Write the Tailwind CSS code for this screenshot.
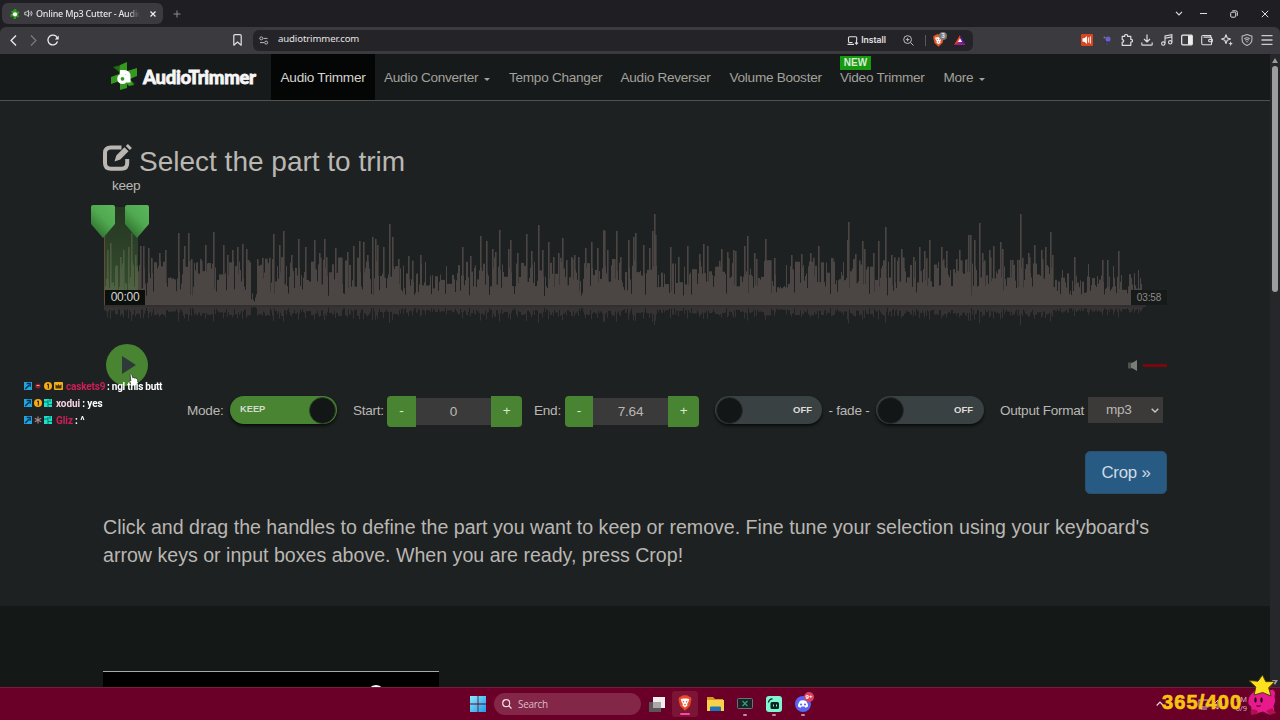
<!DOCTYPE html>
<html lang="en">
  <head>
    <meta charset="UTF-8" />
    <title>Online Mp3 Cutter - Audio Trimmer</title>
    <meta name="viewport" content="width=device-width, initial-scale=1.0" />
    <script src="https://cdn.jsdelivr.net/npm/@tailwindcss/browser@4"></script>
  </head>
  <body class="relative w-[1280px] h-[720px] overflow-hidden flex flex-col bg-[#1d2122] font-['Liberation_Sans',Arial,sans-serif] text-[13.600px] tracking-[-0.270px] text-[#bab7b2]">
    <!-- Tab strip -->
    <div class="h-[27px] shrink-0 bg-[#1f1e23] flex items-center pl-[2px] pr-[11px] font-['Noto_Sans',sans-serif] text-[#e4e4e6]">
      <div class="w-[161px] h-[21px] rounded-md bg-[#3b3a3f] flex items-center pl-[8px] pr-[7px]">
        <svg class="w-[10px] h-[10px] shrink-0" viewBox="0 0 28 28">
          <path fill="#2f9a1c" d="M11 1l7-1v7l8-1-1 8-4 1 5 6-6 3-3-2v6l-7 1v-8l-9 1 1-8 5-2-5-6 7-1z" />
          <circle cx="14" cy="15" r="6" fill="#fff" />
        </svg>
        <svg class="w-[9px] h-[9px] ml-[4px] shrink-0" viewBox="0 0 12 12" fill="none" stroke="#e4e4e6" stroke-width="1.1">
          <path d="M1 4.300h2L6 2v8L3 7.700H1zM7.700 4.300q1.500 1.700 0 3.400M9.300 2.500q3 3.500 0 7" />
        </svg>
        <span class="w-[104px] ml-[3px] text-[9px] leading-none tracking-[-0.220px] py-1 font-medium whitespace-nowrap overflow-hidden mask-r-from-88%">Online Mp3 Cutter - Audio Trimmer</span>
        <svg class="w-[6px] h-[6px] ml-auto" viewBox="0 0 6 6" stroke="#f0f0f0" stroke-width="1.200"><path d="M.5 .5l5 5M5.500 .5l-5 5" /></svg>
      </div>
      <svg class="w-[8px] h-[8px] ml-[10px]" viewBox="0 0 8 8" stroke="#8d8c92" stroke-width="1"><path d="M4 .5v7M.5 4h7" /></svg>
      <div class="ml-auto flex items-center">
        <svg class="w-[8px] h-[5px]" viewBox="0 0 8 5" fill="none" stroke="#ddd" stroke-width="1.200"><path d="M1 .8l3 3 3-3" /></svg>
        <div class="w-[7px] h-px bg-[#ddd] ml-[17px]"></div>
        <svg class="w-[8px] h-[8px] ml-[23px]" viewBox="0 0 8 8" fill="none" stroke="#ddd" stroke-width="1"><rect x=".7" y="2.200" width="5" height="5" rx="1" /><path d="M2.300 .8h3.500q1.500 0 1.500 1.500v3.500" /></svg>
        <svg class="w-[8px] h-[8px] ml-[23px]" viewBox="0 0 8 8" stroke="#ddd" stroke-width="1"><path d="M.8 .8l6.400 6.400M7.200 .8L.8 7.200" /></svg>
      </div>
    </div>

    <!-- Toolbar -->
    <div class="h-[27px] shrink-0 bg-[#3b3a3f] rounded-t-md flex items-center pl-[10px] pr-[7px] pb-px font-[Inter,sans-serif] tracking-normal text-[#e4e4e6]">
      <svg class="w-[7px] h-[11px]" viewBox="0 0 6 10" fill="none" stroke="#ececec" stroke-width="1.200"><path d="M5.300 .5L.8 5l4.500 4.500" /></svg>
      <svg class="w-[7px] h-[11px] ml-[13px]" viewBox="0 0 6 10" fill="none" stroke="#7a797e" stroke-width="1.200"><path d="M.7 .5L5.200 5 .7 9.500" /></svg>
      <svg class="w-[12px] h-[12px] ml-[10px]" viewBox="0 0 12 12" fill="none" stroke="#ececec" stroke-width="1.300"><path d="M10.500 7.500A4.900 4.900 0 1 1 10.300 4" /><path d="M11.700 1.500v4H7.800z" fill="#ececec" stroke="none" /></svg>
      <svg class="w-[9px] h-[12px] ml-[174px]" viewBox="0 0 9 12" fill="none" stroke="#e0e0e0" stroke-width="1.200" stroke-linejoin="round"><path d="M.8 11.200V1.800q0-1.100 1.100-1.100h5.200q1.100 0 1.100 1.100v9.400L4.500 8z" /></svg>
      <div class="w-[720px] h-[21px] ml-[11px] rounded-md bg-[#242328] flex items-center pl-[6px] pr-[7px]">
        <svg class="w-[10px] h-[9px]" viewBox="0 0 10 9" fill="none" stroke="#bbb" stroke-width="1"><circle cx="2.300" cy="2.400" r="1.500" /><path d="M4.500 2.400h4M1 6.600h4" /><circle cx="7.200" cy="6.600" r="1.500" /></svg>
        <span class="ml-[9px] font-['Noto_Sans',sans-serif] text-[9.600px] tracking-[-0.120px] pb-px">audiotrimmer.com</span>
        <svg class="w-[12px] h-[9px] ml-auto" viewBox="0 0 12 9" fill="none" stroke="#ddd" stroke-width="1.100"><path d="M5.500 6.500H2.500q-1 0-1-1V1.700q0-1 1-1h6.200q1 0 1 1V4M.5 8.400h6.500M9.500 4v4M8 6.600l1.500 1.600L11 6.600" /></svg>
        <span class="ml-[2px] text-[8.600px] font-semibold">Install</span>
        <svg class="w-[11px] h-[11px] ml-[17px]" viewBox="0 0 11 11" fill="none" stroke="#bbb" stroke-width="1"><circle cx="4.600" cy="4.600" r="3.900" /><path d="M7.500 7.500l3 3M2.800 4.600h3.600M4.600 2.800v3.600" /></svg>
        <div class="w-px h-[11px] bg-[#5a595f] ml-[11px]"></div>
        <div class="relative ml-[7px]">
          <svg class="w-[11px] h-[13px]" viewBox="0 0 11 13"><path fill="#e2562a" d="M2.500 1L4 .3h3l1.500.7L10.500 2l.2 2-1.200 5-4 3.700-4-3.700L.3 4l.2-2z" /><path fill="#fff" d="M2 3.600l2.200-.4h2.600l2.200.4-.8 2.300-1 1.400.4 1.200-2.100 1.700-2.100-1.700.4-1.200-1-1.400z" /><path fill="#e2562a" d="M3.500 4.500l1.500 1-1 .7zM7.500 4.500l-1.500 1 1 .7zM5.500 7l.8.9-.8.600-.8-.6z" /></svg>
          <div class="absolute -top-[2px] left-[6px] w-[8px] h-[8px] rounded-full bg-[#77767b] text-[6px] leading-[8px] text-center font-bold">3</div>
        </div>
        <svg class="w-[12px] h-[10px] ml-[10px]" viewBox="0 0 12 10"><path fill="#f4401f" d="M6 0L0 10l6-3z" /><path fill="#9b1f8e" d="M0 10h12L6 6.500z" /><path fill="#5b1c8c" d="M6 0l6 10-6-3z" /><path fill="#fff" d="M6 3.200L8.100 7H3.900z" /></svg>
      </div>
      <div class="ml-auto flex items-center gap-[8px]">
        <svg class="w-[12px] h-[12px]" viewBox="0 0 12 12"><rect width="12" height="12" rx="1" fill="#dc4522" /><path fill="#fff" d="M1.500 4.300h1.800L6 2v8L3.300 7.700H1.500z" /><path d="M7.400 3.500v5M9.300 2.500v7" stroke="#fff" stroke-width="1" /></svg>
        <svg class="w-[12px] h-[12px]" viewBox="0 0 12 12"><path fill="#302d55" d="M3 4l3-2 2 7-3 1z" /><circle cx="7" cy="5" r="2.600" fill="#6a61c4" /><circle cx="3.500" cy="3.600" r="1" fill="#82816f" /><circle cx="6" cy="9.500" r="1" fill="#4a466f" /></svg>
        <svg class="w-[12px] h-[12px]" viewBox="0 0 12 12" fill="none" stroke="#ddd" stroke-width="1.200" stroke-linejoin="round"><path d="M1.200 2.400h2.500q-.2-1.900 1.400-1.900t1.500 1.900h3.200v3q1.700-.1 1.700 1.300T9.800 8v3.300H1.200V8.200q1.500 0 1.500-1.300T1.200 5.600z" /></svg>
        <svg class="w-[12px] h-[12px]" viewBox="0 0 12 12" fill="none" stroke="#ddd" stroke-width="1.200"><path d="M6 .5v7M3 5l3 3 3-3M.8 8.500v1.700q0 1 1 1h8.400q1 0 1-1V8.500" /></svg>
        <svg class="w-[12px] h-[12px]" viewBox="0 0 12 12" fill="none" stroke="#ddd" stroke-width="1.100"><circle cx="2.300" cy="9.600" r="1.700" /><circle cx="9.200" cy="8.300" r="1.700" /><path d="M4 9.600V2l6.900-1.300v7.600M4 4.200l6.900-1.300" /></svg>
        <svg class="w-[12px] h-[12px]" viewBox="0 0 12 12"><rect x=".7" y="1.200" width="10.600" height="9.600" rx="1" fill="none" stroke="#eee" stroke-width="1.200" /><rect x="7" y="1.500" width="4" height="9" fill="#eee" /></svg>
        <svg class="w-[12px] h-[12px]" viewBox="0 0 12 12" fill="none" stroke="#ddd" stroke-width="1.100"><path d="M9.700 3V1.500H2Q.7 1.500.7 2.700v6.600q0 1.400 1.400 1.400h7.600q.8 0 .8-.8V3.900q0-.8-.8-.8H2.500M11.300 5.400H8.600q-1 0-1 1.200t1 1.200h2.700z" /></svg>
        <svg class="w-[12px] h-[12px]" viewBox="0 0 12 12" fill="none" stroke="#ddd" stroke-width="1.100" stroke-linejoin="round"><path d="M5 .8l1.200 3.100L9.500 5 6.200 6.300 5 9.500 3.800 6.300.6 5l3.200-1.100z" /><path fill="#ddd" stroke="none" d="M9.700 7.300l.7 1.600 1.500.7-1.500.6-.7 1.700-.7-1.700-1.500-.6L9 8.900z" /></svg>
        <svg class="w-[12px] h-[12px]" viewBox="0 0 12 12" fill="none" stroke="#bbb" stroke-width="1.100"><path d="M6 .6l4.900 1.600v3.500q0 3.700-4.900 5.700Q1.100 9.400 1.100 5.700V2.200z" /><path d="M3.300 4.700q2.700-2 5.400 0M4.200 6.200q1.800-1.300 3.600 0M5.200 7.700h1.600" /></svg>
        <svg class="w-[12px] h-[12px]" viewBox="0 0 12 12" stroke="#ccc" stroke-width="1.300"><path d="M.5 1.700h11M.5 6h11M.5 10.300h11" /></svg>
      </div>
    </div>

    <!-- Page -->
    <div class="h-[633px] shrink-0 flex">
      <div class="w-[1270px] flex flex-col">
        <nav class="h-[47px] shrink-0 bg-[#161a1a] border-b border-[#50524f] flex pl-[110px] text-[#a3a19c] whitespace-nowrap">
          <div class="w-[161px] flex items-center">
            <svg class="w-[28px] h-[29px] -mt-[2px]" viewBox="0 0 28 29">
              <path fill="#1f6a12" d="M3 5l8-2 3 11zM25 22l-8-1-3-8z" />
              <path fill="#35991f" d="M10 3l7-3v9l10-3v8l-7 3 4 6-5 1-2-2v4l-7 2v-9l-9 3v-7l8-3z" />
              <path fill="none" stroke="#fff" stroke-width="4" d="M18.500 20.500v-6q0-4.500-4.500-4.500h-4" />
              <circle cx="12.500" cy="16.800" r="3.600" fill="none" stroke="#fff" stroke-width="3.400" />
            </svg>
            <span class="ml-[5px] font-[Lato,sans-serif] font-black text-[18.500px] leading-none tracking-[-0.300px] text-[#f6f6f6] [-webkit-text-stroke:0.800px_#f6f6f6]">AudioTrimmer</span>
          </div>
          <a class="w-[104px] pt-[2px] bg-[#040606] text-[#d6d4d0] flex items-center justify-center">Audio Trimmer</a>
          <a class="ml-[9px] w-[106px] pt-[2px] flex items-center">Audio Converter<span class="ml-auto mt-[3px] border-x-[3.500px] border-x-transparent border-t-[3px] border-t-[#a3a19c]"></span></a>
          <a class="ml-[19px] w-[93px] pt-[2px] flex items-center">Tempo Changer</a>
          <a class="ml-[18.500px] w-[91px] pt-[2px] flex items-center">Audio Reverser</a>
          <a class="ml-[18px] w-[92px] pt-[2px] flex items-center">Volume Booster</a>
          <a class="relative ml-[18.500px] w-[85px] pt-[2px] flex items-center">Video Trimmer
            <span class="absolute left-0 top-[2px] w-[31px] h-[14px] bg-[#179a10] text-[#dcebd8] text-[10px] tracking-normal leading-[14px] font-bold text-center">NEW</span>
          </a>
          <a class="ml-[18.500px] pt-[2px] flex items-center">More<span class="ml-[6px] mt-[3px] border-x-[3.500px] border-x-transparent border-t-[3px] border-t-[#a3a19c]"></span></a>
        </nav>

        <section class="h-[505px] shrink-0 pl-[103px] pr-[103px] bg-[#1d2122] flex flex-col">
          <h2 class="mt-[42px] h-[36px] flex items-center text-[28px] tracking-normal leading-[36px] pt-px">
            <svg class="w-[30px] h-[28px] mr-[6px] -mt-[7px]" viewBox="0 0 30 28" fill="none" stroke="#bab7b2" stroke-width="4">
              <path d="M18.500 3.500H8Q2 3.500 2 9v10q0 5.800 6 5.800h10.500q5.700 0 5.700-5.800v-4" />
              <path fill="#bab7b2" stroke="none" d="M11.500 17.500l1.800-6 8.200-8.200 4 4-8.200 8.200zM22.800 2.100L24.900 0l4 4-2.100 2.100z" />
            </svg>
            Select the part to trim
          </h2>
          <div class="ml-[9px] h-[15px] leading-[14px]">keep</div>

          <!-- Waveform with selection -->
          <div class="relative h-[131px] mt-[8px] -ml-[13px] w-[1077px]">
            <canvas id="wave" width="1077" height="131" class="block"></canvas>
            <div class="absolute left-[14px] top-[5px] w-[34px] h-[98px] bg-linear-to-b from-[#356a20]/30 to-[#5b8c45]/45 border-l border-[#6b4632]"></div>
            <svg class="absolute left-0 top-[2px] w-[60px] h-[36px]" viewBox="0 0 60 36">
              <defs>
                <linearGradient id="handle" x1="1" y1="0" x2="0.300" y2="1">
                  <stop offset="0" stop-color="#5cb85c" />
                  <stop offset="0.500" stop-color="#50a950" />
                  <stop offset="1" stop-color="#2d6d2d" />
                </linearGradient>
              </defs>
              <path fill="url(#handle)" d="M3 1h20q2 0 2 2v17L13 34 1 20V3q0-2 2-2z" />
              <path fill="url(#handle)" d="M37 1h20q2 0 2 2v17L47 34 35 20V3q0-2 2-2z" />
            </svg>
            <span class="absolute left-[15px] top-[88px] w-[40px] h-[15px] bg-[#0c100d] text-[#d6d4d0] text-[12px] leading-[15px] text-center">00:00</span>
            <span class="absolute left-[1041px] top-[88px] w-[36px] h-[15px] bg-[#171a1b] text-[#8d8b88] text-[10px] tracking-[-0.100px] leading-[15px] text-center">03:58</span>
          </div>

          <div class="mt-[11px] h-[42px] flex items-center">
            <div class="w-[42px] h-[42px] ml-[3px] rounded-full bg-[#488431] flex items-center justify-center">
              <svg class="w-[14px] h-[18px] ml-[3px] -mt-px" viewBox="0 0 14 18"><path fill="#30393a" d="M0 0l14 9-14 9z" /></svg>
            </div>
            <svg class="w-[9px] h-[11px] ml-auto" viewBox="0 0 9 11"><path fill="#4d504d" d="M0 2.500h4v6H0z" /><path fill="#7b7d77" d="M9 0v11L3 7.500v-4z" /></svg>
            <div class="w-[24px] h-[3px] ml-[6px] bg-[#78080f]"></div>
          </div>

          <div class="mt-[7px] h-[36px] ml-[84px] flex items-center whitespace-nowrap">
            <span class="w-[43px]">Mode:</span>
            <div class="w-[107px] h-[28px] -mt-[2px] rounded-full bg-[#488431] shadow-[0_2px_3px_#0a0c0c] flex items-center pl-[10px] pr-px text-[#d3dccf] text-[9.300px] tracking-normal font-bold">KEEP
              <span class="ml-auto w-[27px] h-[27px] rounded-full bg-[#121617] border border-[#2c4322]"></span>
            </div>
            <span class="ml-[16px] w-[34px]">Start:</span>
            <div class="flex items-center text-center">
              <span class="w-[29px] h-[31px] rounded-l bg-[#488431] leading-[30px] text-[#dbe6d5]">-</span>
              <span class="w-[75px] h-[27px] bg-[#3b3a3a] leading-[27px]">0</span>
              <span class="w-[31px] h-[31px] rounded-r bg-[#488431] leading-[30px] text-[#dbe6d5]">+</span>
            </div>
            <span class="ml-[12px] w-[31px]">End:</span>
            <div class="flex items-center text-center">
              <span class="w-[28px] h-[31px] rounded-l bg-[#488431] leading-[30px] text-[#dbe6d5]">-</span>
              <span class="w-[75px] h-[27px] bg-[#3b3a3a] leading-[27px]">7.64</span>
              <span class="w-[31px] h-[31px] rounded-r bg-[#488431] leading-[30px] text-[#dbe6d5]">+</span>
            </div>
            <div class="ml-[16px] w-[107px] h-[28px] -mt-[2px] rounded-full bg-[#3a4143] shadow-[0_2px_3px_#0a0c0c] flex items-center pl-px pr-[10px] text-[#dddcd9] text-[9.500px] tracking-normal font-bold">
              <span class="mr-auto w-[27px] h-[27px] rounded-full bg-[#121617] border border-[#272c2d]"></span>OFF
            </div>
            <span class="w-[54px] text-center">- fade -</span>
            <div class="w-[108px] h-[28px] -mt-[2px] rounded-full bg-[#3a4143] shadow-[0_2px_3px_#0a0c0c] flex items-center pl-px pr-[11px] text-[#dddcd9] text-[9.500px] tracking-normal font-bold">
              <span class="mr-auto w-[27px] h-[27px] rounded-full bg-[#121617] border border-[#272c2d]"></span>OFF
            </div>
            <span class="ml-[16px] w-[88px]">Output Format</span>
            <div class="w-[75px] h-[26px] -mt-[2px] bg-[#3b3a39] flex items-center pl-[18px] pr-[4px]">mp3
              <svg class="w-[8px] h-[5px] ml-auto" viewBox="0 0 8 5" fill="none" stroke="#c8c6c2" stroke-width="1.400"><path d="M.7 .7L4 4 7.300 .7" /></svg>
            </div>
          </div>

          <div class="mt-[22px] ml-auto w-[82px] h-[43px] rounded-[5px] bg-[#285b84] border border-[#2c5069] text-[#cfdbe4] text-[16.800px] tracking-[-0.200px] leading-[41px] text-center">Crop »</div>

          <p class="mt-[19px] text-[19.600px] tracking-normal leading-[28px] whitespace-nowrap">Click and drag the handles to define the part you want to keep or remove. Fine tune your selection using your keyboard's<br />arrow keys or input boxes above. When you are ready, press Crop!</p>
        </section>

        <section class="h-[82px] shrink-0 bg-[#141817] pl-[103px] pt-[65px] overflow-hidden">
          <div class="w-[336px] h-[17px] bg-black border-t border-[#a9a9a7] overflow-hidden flex text-white">
            <span class="ml-[122px] mt-[12px] text-[14px] leading-[18px] tracking-normal font-bold">Trim Audio Clips</span>
            <span class="ml-[31px] mt-[13px] w-[18px] h-[18px] rounded-full bg-white"></span>
          </div>
        </section>
      </div>
      <!-- Scrollbar -->
      <div class="w-[10px] bg-[#26272a] flex flex-col items-center pt-[4px] pb-[2px]">
        <div class="border-x-[3.500px] border-x-transparent border-b-[5px] border-b-[#9a9a9a]"></div>
        <div class="w-[6px] h-[226px] mt-[3px] rounded-full bg-[#9c9d9d]"></div>
        <div class="mt-auto border-x-[3.500px] border-x-transparent border-t-[5px] border-t-[#9a9a9a]"></div>
      </div>
    </div>

    <!-- Taskbar -->
    <div class="h-[33px] shrink-0 bg-[#6a0028] border-t border-[#7b1c3c] flex items-center pl-[470px] font-['Open_Sans',sans-serif] tracking-normal">
      <svg class="w-[16px] h-[16px]" viewBox="0 0 16 16">
        <defs><linearGradient id="win" x1="0" y1="0" x2="1" y2="1"><stop offset="0" stop-color="#8ce8fb" /><stop offset="1" stop-color="#1e9be8" /></linearGradient></defs>
        <path fill="url(#win)" d="M0 0h7.600v7.600H0zM8.400 0H16v7.600H8.400zM0 8.400h7.600V16H0zM8.400 8.400H16V16H8.400z" />
      </svg>
      <div class="ml-[8px] w-[147px] h-[22px] rounded-full bg-[#832648] flex items-center pl-[8px] text-[10px] text-[#dcbcc8]">
        <svg class="w-[10px] h-[10px] mr-[6px]" viewBox="0 0 10 10" fill="none" stroke="#f0e0e6" stroke-width="1.200"><circle cx="4.200" cy="4.200" r="3.500" /><path d="M6.800 6.800l2.700 2.700" /></svg>
        <span class="tracking-[-0.300px]">Search</span>
      </div>
      <svg class="w-[16px] h-[15px] ml-[8px]" viewBox="0 0 16 15"><rect x="4" width="12" height="11" fill="#f1eef0" /><rect y="5" width="12" height="10" fill="#5c565b" /><rect x="4" y="5" width="8" height="6" fill="#aaa8a9" /></svg>
      <div class="w-[26px] h-[26px] ml-[7px] rounded-[3px] bg-[#7b1435] flex flex-col items-center pt-[4px]">
        <svg class="w-[14px] h-[16px] shrink-0" viewBox="0 0 11 13"><path fill="#ea4826" d="M2.500 1L4 .3h3l1.500.7L10.500 2l.2 2-1.200 5-4 3.700-4-3.700L.3 4l.2-2z" /><path fill="#fff" d="M2 3.200l2.200-.4h2.600l2.200.4-.8 2.700-1 1.400.4 1.200-2.100 1.700-2.100-1.700.4-1.200-1-1.400z" /><path fill="#ea4826" d="M3.500 4.500l1.500 1-1 .7zM7.500 4.500l-1.500 1 1 .7zM5.500 7l.8.900-.8.600-.8-.6z" /></svg>
        <div class="w-[10px] h-[2px] mt-[2px] rounded-full bg-[#ef4f9c]"></div>
      </div>
      <svg class="w-[17px] h-[14px] ml-[9px]" viewBox="0 0 17 14"><path fill="#d99a1c" d="M0 0h6l2 2h8v4H0z" /><path fill="#f9d24b" d="M0 3h17v11H0z" /><path fill="#1d75b9" d="M3 14v-3.500q0-1 1-1h9q1 0 1 1V14z" /></svg>
      <div class="w-[16px] ml-[13px] mt-[5px] flex flex-col items-center">
        <svg class="w-[16px] h-[11px]" viewBox="0 0 16 11"><rect x=".5" y=".5" width="15" height="10" rx="1" fill="#1a2428" stroke="#66777a" /><path d="M5.500 3l5 5M10.500 3l-5 5" stroke="#2ea86f" stroke-width="1.200" /></svg>
        <div class="w-[4px] h-[2px] mt-[5px] rounded-full bg-[#c58aa0]"></div>
      </div>
      <div class="w-[16px] ml-[13px] mt-[4px] flex flex-col items-center">
        <svg class="w-[16px] h-[16px]" viewBox="0 0 16 16"><rect width="16" height="16" rx="3" fill="#80f5d2" /><rect x="4.500" y="6" width="8.500" height="7" rx="1.500" fill="#0a2520" /><path d="M2.500 6.500q.5-3.500 4-3.700" fill="none" stroke="#0a2520" stroke-width="1.300" /><path d="M7.500 8.500v2M10.500 8.500v2" stroke="#80f5d2" /></svg>
        <div class="w-[4px] h-[2px] mt-[2px] rounded-full bg-[#c58aa0]"></div>
      </div>
      <div class="relative w-[16px] ml-[13px] mt-[4px] flex flex-col items-center">
        <svg class="w-[16px] h-[16px]" viewBox="0 0 16 16"><circle cx="8" cy="8" r="8" fill="#5865f2" /><path fill="#fff" d="M5 4.800q3-1 6 0 2 2.700 2 5.700-1.200 1-2.700 1.200l-.7-1.200H6.400l-.7 1.200Q4.200 11.500 3 10.500q0-3 2-5.700z" /><circle cx="6.100" cy="8.500" r="1.100" fill="#5865f2" /><circle cx="9.900" cy="8.500" r="1.100" fill="#5865f2" /></svg>
        <div class="w-[4px] h-[2px] mt-[2px] rounded-full bg-[#c58aa0]"></div>
        <div class="absolute -top-[4px] left-[9px] w-[10px] h-[10px] rounded-full bg-[#d8405c] text-white text-[6px] leading-[10px] text-center font-bold">9+</div>
      </div>
    </div>

    <!-- Mouse pointer -->
    <svg class="absolute left-[128px] top-[373px] w-[11px] h-[13px]" viewBox="0 0 11 13"><path fill="#fff" stroke="#222" stroke-width=".7" d="M2 1q1-1 1.700.3l1 3.400.8-.2.900.5 1-.1.700.6 1 .1.700 1.400-.3 3-1 2.500H4.600L1.200 8.300q0-1 1.700-.5z" /></svg>

    <!-- Chat overlay -->
    <div class="absolute left-[24px] top-[377.500px] flex flex-col font-[Roboto,sans-serif] font-bold text-[10px] tracking-[-0.060px] text-white leading-[17px] whitespace-nowrap">
      <div class="h-[17px] flex items-center">
        <svg class="w-[8px] h-[8px]" viewBox="0 0 8 8"><rect width="8" height="8" fill="#20a5de" /><path d="M1.200 7L5 3.200M2.700 1.500h3.500v3.300" stroke="#0b2e4a" stroke-width="1.400" fill="none" /></svg>
        <svg class="w-[8px] h-[8px] ml-[2px]" viewBox="0 0 8 8"><circle cx="4" cy="4" r="2.600" fill="#8d1e2a" /><path d="M2.500 3.500h3" stroke="#e39a9a" stroke-width="1" /></svg>
        <svg class="w-[8px] h-[8px] ml-[2px]" viewBox="0 0 8 8"><circle cx="4" cy="4" r="4" fill="#f4ab18" /><path d="M3 2.300h1.400V6.500" stroke="#462b00" stroke-width="1.200" fill="none" /></svg>
        <svg class="w-[9px] h-[8px] ml-[2px]" viewBox="0 0 9 8"><rect width="9" height="8" rx="1" fill="#f1b01e" /><path fill="#4a3000" d="M1.500 6.500V2.300l1.800 1.500L4.500 2l1.200 1.800 1.800-1.500v4.200z" /></svg>
        <span class="ml-[3px] w-[39px] tracking-[-0.150px] text-[#cf1f58]">caskets9</span><span class="ml-[2px] tracking-[-0.250px]">: ngl this butt</span>
      </div>
      <div class="h-[17px] flex items-center">
        <svg class="w-[8px] h-[8px]" viewBox="0 0 8 8"><rect width="8" height="8" fill="#20a5de" /><path d="M1.200 7L5 3.200M2.700 1.500h3.500v3.300" stroke="#0b2e4a" stroke-width="1.400" fill="none" /></svg>
        <svg class="w-[8px] h-[8px] ml-[2px]" viewBox="0 0 8 8"><circle cx="4" cy="4" r="4" fill="#f4ab18" /><path d="M3 2.300h1.400V6.500" stroke="#462b00" stroke-width="1.200" fill="none" /></svg>
        <svg class="w-[8px] h-[8px] ml-[2px]" viewBox="0 0 8 8"><rect width="8" height="8" fill="#1fe0c8" /><path d="M0 3h4V1M4 3v5M4 5.500h4M6 0v3" stroke="#0a6b62" stroke-width=".9" fill="none" /></svg>
        <span class="ml-[4px] text-[#f7d3e4]">xodui</span><span class="ml-[2px]">: yes</span>
      </div>
      <div class="h-[17px] flex items-center">
        <svg class="w-[8px] h-[8px]" viewBox="0 0 8 8"><rect width="8" height="8" fill="#20a5de" /><path d="M1.200 7L5 3.200M2.700 1.500h3.500v3.300" stroke="#0b2e4a" stroke-width="1.400" fill="none" /></svg>
        <svg class="w-[8px] h-[8px] ml-[2px]" viewBox="0 0 8 8" stroke="#a5868d" stroke-width="1.200"><path d="M4 .5v7M.8 2.200l6.400 3.600M7.200 2.200L.8 5.800" /></svg>
        <svg class="w-[8px] h-[8px] ml-[2px]" viewBox="0 0 8 8"><rect width="8" height="8" fill="#1fe0c8" /><path d="M0 3h4V1M4 3v5M4 5.500h4M6 0v3" stroke="#0a6b62" stroke-width=".9" fill="none" /></svg>
        <span class="ml-[4px] text-[#cf1f58]">Gliz</span><span class="ml-[2px]">: ^</span>
      </div>
    </div>

    <!-- Tray and counter overlay -->
    <svg class="absolute left-[1156px] top-[701px] w-[8px] h-[6px]" viewBox="0 0 8 6" fill="none" stroke="#eadde2" stroke-width="1.200"><path d="M.7 4.500L4 1.200l3.300 3.300" /></svg>
    <svg class="absolute left-[1196px] top-[697px] w-[30px] h-[14px]" viewBox="0 0 30 14" fill="none" stroke="#d9c2cb" stroke-width="1"><rect x="3" y="3" width="9" height="7" /><path d="M5 12h6M17 6v4h2l3 2V3l-3 3zM25 4q2 3 0 7" /></svg>
    <div class="absolute left-[1232px] top-[695px] w-[15px] font-['Open_Sans',sans-serif] tracking-normal text-[7.500px] leading-[9px] text-right text-[#d9c2cb]">PM<br />6/9</div>
    <div class="absolute left-[1162px] top-[692px] text-[20px] leading-[21px] tracking-[1.150px] font-bold text-[#f6c40f] [-webkit-text-stroke:0.700px_#f6c40f]">365/400</div>
    <svg class="absolute left-[1244px] top-[673px] w-[34px] h-[44px]" viewBox="0 0 34 44">
      <path fill="#e8198a" stroke="#5a0832" stroke-width="1" d="M8 20q8-8 17-3l4-1q4 3 2 8 2 4-1 9l1 6-6 3-6-3-7 2-6-1 1-6-3-3q-1-7 4-11z" />
      <path fill="#b30e52" d="M7 36l6 1 1 4-7 1zM22 38l6-3 4 5-6 2z" />
      <ellipse cx="11.500" cy="27" rx="1.200" ry="2.800" fill="#1c0a24" /><ellipse cx="17.500" cy="27" rx="1.200" ry="2.800" fill="#1c0a24" />
      <path d="M12.500 32.500q2 1.500 4 0" stroke="#5a0832" stroke-width="1.200" fill="none" />
      <path fill="#fde01e" stroke="#4a3c10" stroke-width="1" d="M18.500 2l3.300 6.700 9-.2-6.100 6.300 2.300 8.200-8.300-3.500-8.600 2.500 1.700-8L5 7.500l9 .7z" />
    </svg>

    <script>
      // loud peaks as [x, height above the axis]
      const peaks = [
        [107,55],[110,62],[116,40],[120,48],[123,55],[128,58],[131,72],[135,50],[140,59],[143,59],[148,57],[151,47],[159,52],[165,55],[178,72],[184,59],[188,72],[194,42],[200,46],[205,60],[213,73],[223,60],[227,50],[232,55],[237,58],[242,61],[246,56],[248,45],
        [262,47],[273,71],[279,60],[283,74],[291,50],[298,66],[305,58],[314,65],[319,52],[324,66],[335,57],[347,53],[353,59],[359,64],[363,63],[367,50],[372,68],[375,66],[377,60],[383,58],[389,81],[392,68],[398,46],[408,49],[420,50],[425,43],
        [446,39],[462,58],[470,49],[480,69],[486,64],[492,56],[495,53],[499,75],[508,56],[510,65],[517,52],[526,71],[531,54],[538,80],[542,55],[548,63],[553,48],[558,52],[562,67],[574,50],[578,48],[585,57],[591,63],[597,57],[603,75],[604,74],[607,55],[616,74],[620,48],[628,65],[633,68],[635,72],[643,60],[649,57],[652,74],[654,91],[655,70],
        [670,58],[678,48],[687,59],[699,51],[703,61],[707,59],[721,56],[727,53],[733,55],[735,54],[744,59],[747,69],[754,52],[765,66],[774,47],[786,40],[791,50],[801,51],[810,52],[818,59],[831,47],[843,43],[847,65],[848,83],
        [855,51],[862,64],[864,56],[873,52],[878,64],[885,78],[891,50],[901,56],[913,48],[919,58],[924,54],[929,65],[941,58],[946,54],[956,46],[959,55],[968,70],[970,70],[974,65],[979,82],[982,52],[989,55],[993,59],[1000,63],[1002,56],[1010,45],[1020,91],[1028,52],[1034,60],[1041,55],[1045,58],[1050,73],[1052,50],
        [1062,35],[1074,48],[1088,41],[1102,45],[1107,45],[1113,39],[1118,54],[1121,30],[1134,32],[1138,35],[1141,21]
      ];
      const ctx = document.getElementById("wave").getContext("2d");
      const left = 90, axis = 103;
      let seed = 77;
      const rand = () => (seed = (seed * 16807) % 2147483647) / 2147483647;

      const heights = [];
      let level = 30;
      for (let x = 104; x < 1143; x++) {
        const quiet = x > 1056 || (x > 425 && x < 458) || (x > 766 && x < 786);
        if (rand() < 0.65) level = quiet ? 12 + rand() * 20 : 18 + rand() * 30;
        let h = level;
        if (rand() < 0.12) h = 9 + rand() * 10;
        if (x > 250 && x < 257) h = 3 + rand() * 10;
        heights[x] = h;
      }
      peaks.forEach(([x, h]) => { heights[x] = h; });

      heights.forEach((h, x) => {
        ctx.fillStyle = "#4b4644";
        ctx.fillRect(x - left, axis - h, 1, h);
        if (h > 44) {
          ctx.fillStyle = "#4b464499";
          ctx.fillRect(x - left + 1, axis - h, 1, h);
        }
        ctx.fillStyle = "#373333";
        ctx.fillRect(x - left, axis, 1, 1 + h * 0.21);
      });
      ctx.fillStyle = "#4d4644";
      ctx.fillRect(14, axis - 1, 1046, 1);
      ctx.fillStyle = "#322f30";
      ctx.fillRect(14, axis, 1042, 2);
    </script>
  </body>
</html>
